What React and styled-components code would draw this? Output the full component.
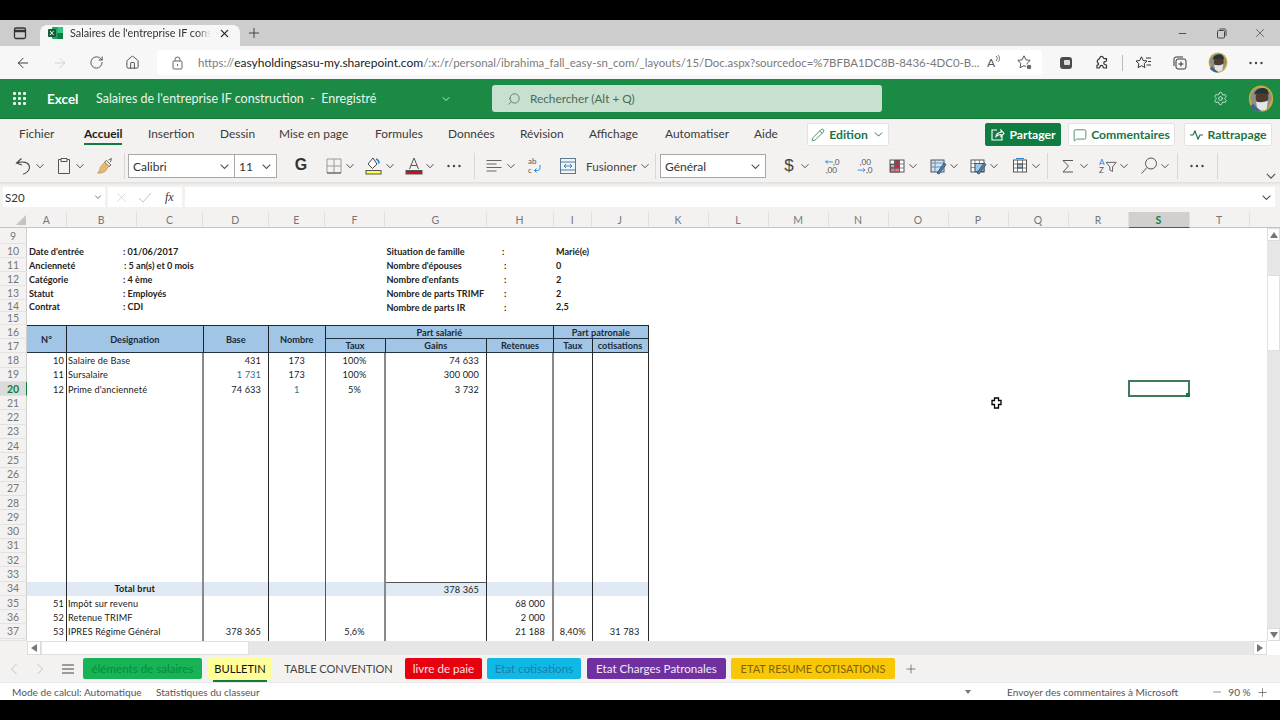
import React from 'react';
import styled, { createGlobalStyle } from 'styled-components';
import { ArrowLeft, ArrowRight, RotateCw, Home, Plus, X, Minus, Search, Settings, ChevronDown, Pencil, MessageSquare } from 'lucide-react';

const Global = createGlobalStyle`
  html, body { margin: 0; padding: 0; background: #000; }
  * { box-sizing: border-box; }
`;
const UI = `"Lato", "Liberation Sans", sans-serif`;
const Page = styled.div`
  width: 1280px; height: 720px; overflow: hidden; background: #000; display: flex; flex-direction: column;
  padding: 20px 0; font-family: ${UI}; color: #333;
`;
/* browser chrome */
const TabStrip = styled.div`height: 26px; background: #cdcdcd; display: flex; align-items: flex-end; position: relative; flex: none;`;
const TabAction = styled.div`width: 40px; height: 26px; display: flex; align-items: center; justify-content: center;`;
const ActiveTab = styled.div`
  width: 200px; height: 21px; background: #f7f7f7; border-radius: 7px 7px 0 0; display: flex; align-items: center; padding: 0 9px 5px 8px; gap: 7px; color: #333;
`;
const TabTitle = styled.span`
  flex: 1; overflow: hidden; white-space: nowrap; font-size: 10.8px; height: 14px;
  -webkit-mask-image: linear-gradient(90deg, #000 90%, transparent 100%);
`;
const NewTab = styled.div`width: 28px; height: 26px; display: flex; align-items: center; justify-content: center; color: #333;`;
const WindowBtns = styled.div`margin-left: auto; display: flex; height: 26px; padding-right: 1px;`;
const WinBtn = styled.div`width: 38.5px; display: flex; align-items: center; justify-content: center; color: #444;`;

const AddressBar = styled.div`height: 33px; background: #f7f7f7; display: flex; align-items: center; flex: none; padding-left: 5px;`;
const NavBtn = styled.div`width: 36.5px; height: 24px; display: flex; align-items: center; justify-content: center; color: ${p => p.$dim ? '#c9c9c9' : '#333'};`;
const UrlField = styled.div`
  width: 885px; height: 25px; margin-left: 6px; background: #fff; border-radius: 4px; display: flex; align-items: center; padding-left: 15px; font-size: 11.45px; color: #7a7a7a; white-space: nowrap; flex: none;
`;
const UrlText = styled.span`margin-left: 15px; width: 780px; flex: none;`;
const Host = styled.span`color: #222; font-size: 12px;`;
const UrlIcon = styled.div`width: 31px; display: flex; justify-content: center; align-items: center; flex: none; color: #555;`;
const ReadAloud = styled.span`font-size: 12px; color: #555; display: flex; align-items: flex-start;`;
const BarTools = styled.div`display: flex; align-items: center; margin-left: 6px; flex: 1;`;
const BarTool = styled.div`width: ${p => p.$w}px; margin-left: ${p => p.$ml || 0}px; display: flex; align-items: center; justify-content: center; flex: none; color: #333;`;
const BarSep = styled.div`width: 1px; height: 16px; background: #bbb; margin-left: 7px; flex: none;`;

/* excel header */
const AppHeader = styled.div`height: 40px; background: #1a8a45; display: flex; align-items: center; color: #fff; flex: none; border-bottom: 1px solid #17793d;`;
const Waffle = styled.div`width: 14px; height: 14px; margin-left: 13px; display: grid; grid-template-columns: repeat(3, 3px); gap: 2px; flex: none;`;
const Dot = styled.i`width: 3px; height: 3px; background: #e8f4ec; border-radius: 1px;`;
const Brand = styled.div`font-size: 13.5px; font-weight: 700; margin-left: 20px; width: 49px; flex: none; white-space: nowrap;`;
const DocTitle = styled.div`font-size: 12.5px; width: 344px; white-space: nowrap; flex: none; color: #e9f4ed;`;
const TitleChev = styled.div`width: 52px; flex: none; display: flex; color: #cfe6d7;`;
const SearchBox = styled.div`
  width: 390px; height: 27px; background: #c8e0d0; border-radius: 3px; display: flex; align-items: center; padding-left: 15px; gap: 9px; font-size: 11.8px; color: #4d6a58; flex: none;
`;
const HeaderRight = styled.div`margin-left: auto; display: flex; align-items: center; gap: 20px; padding-right: 6px;`;

/* ribbon */
const RibbonTabs = styled.div`height: 31px; background: #f3f2f1; display: flex; align-items: flex-start; padding-left: 19px; flex: none; font-size: 11.9px; color: #3b3a39;`;
const RTab = styled.div`
  width: ${p => p.$w}px; flex: none; padding-top: 7px; white-space: nowrap;
`;
const RLabel = styled.span`
  display: inline-block; height: 25px; ${p => p.$on && `color:#201f1e; font-weight:700; border-bottom: 2px solid #107c41; height: 19px;`}
`;
const Pill = styled.div`
  margin-top: 4px; margin-left: ${p => p.$ml || 0}px; width: ${p => p.$w}px; height: 23px; border-radius: 2px; display: flex; align-items: center; justify-content: center; gap: 4px; flex: none;
  background: ${p => p.$green ? '#107c41' : '#fff'}; color: ${p => p.$green ? '#fff' : '#217346'}; font-weight: 700; font-size: 12.2px;
  border: 1px solid ${p => p.$green ? '#107c41' : '#e3e2e0'};
`;
const Toolbar = styled.div`height: 33px; background: #f3f2f1; display: flex; align-items: center; padding-left: 13px; flex: none; border-bottom: 1px solid #e2e1df; box-shadow: 0 1px 2px #e0e0e0; position: relative;`;
const Tool = styled.div`
  width: ${p => p.$w}px; margin-left: ${p => p.$ml || 0}px; height: 24px; display: flex; align-items: center; justify-content: center; flex: none; color: #555;
`;
const ToolSep = styled.div`width: 1px; height: 26px; background: #d8d7d5; margin-left: ${p => p.$ml}px; flex: none;`;
const FontBox = styled.div`
  width: ${p => p.$w}px; margin-left: ${p => p.$ml}px; height: 24px; background: #fff; border: 1px solid #a9a8a6; display: flex; flex: none; font-size: 12px; color: #333;
`;
const FontPart = styled.div`
  width: ${p => p.$w}px; display: flex; align-items: center; justify-content: space-between; padding: 0 4px 0 4px; flex: ${p => p.$w ? 'none' : 1};
  ${p => p.$div && 'border-left: 1px solid #a9a8a6;'}
`;
const Bold = styled.span`font-size: 16px; font-weight: 700; color: #333; font-family: "Liberation Sans", sans-serif; margin-top: -2px;`;
const ToolText = styled.span`font-size: 11.7px; color: #444; margin-left: ${p => p.$ml}px; width: 50px; flex: none; white-space: nowrap;`;
const RibbonCollapse = styled.div`position: absolute; right: 3px; bottom: 0; color: #555; display: flex;`;

/* formula */
const FormulaBar = styled.div`height: 29px; background: #f3f2f1; display: flex; align-items: flex-start; padding: 4px 5px 0 3px; gap: 3px; flex: none;`;
const NameBox = styled.div`width: 102px; height: 20px; background: #fff; display: flex; align-items: center; justify-content: space-between; padding: 0 3px 0 2px; font-size: 11.5px; color: #333; flex: none;`;
const FxBox = styled.div`width: 74px; height: 20px; background: #fff; display: flex; align-items: center; padding-left: 6px; gap: 9px; flex: none;`;
const Fx = styled.i`font-family: "Liberation Serif", serif; font-size: 12px; color: #333; margin-left: 4px;`;
const FormulaField = styled.div`flex: 1; height: 20px; background: #fff;`;
const FormulaChev = styled.div`position: absolute; right: 3px; color: #555; display: flex;`;
const FormulaWrap = styled.div`position: relative; display: flex; align-items: center; flex: 1; height: 20px;`;

const ColHeaders = styled.div`height: 16px; background: #f3f2f1; display: flex; border-bottom: 1px solid #c6c5c3; flex: none;`;
const Corner = styled.div`width: 27px; flex: none; position: relative;`;
const Tri = styled.div`position: absolute; right: 1px; bottom: 2px; width: 0; height: 0; border-left: 10px solid transparent; border-bottom: 10px solid #c4c4c4;`;
const ColHead = styled.div`
  width: ${p => p.$w}px; flex: none; display: flex; align-items: center; justify-content: center; font-size: 10.5px; color: ${p => p.$on ? '#107c41' : '#777'};
  font-weight: ${p => p.$on ? 700 : 400}; background: ${p => p.$on ? '#d2d0ce' : 'transparent'};
  border-right: 1px solid #e1e0de; ${p => p.$on && 'border-bottom: 1.5px solid #107c41; height: 16px;'}
`;

/* sheet */
const SheetArea = styled.div`height: 413px; display: flex; flex: none; background: #fff;`;
const Sheet = styled.div`
  position: relative; flex: 1; overflow: hidden; display: grid; font-family: "Lato", sans-serif; font-size: 9.2px; color: #1a1a1a;
  grid-template-columns: 27px 40px 70.5px 66px 65.5px 56.5px 60px 101.5px 67px 38.5px 56px 1fr;
  grid-template-rows: 16px 14px 14px 14px 14px 12px 13px 14.2px 14.2px repeat(20, 14.27px) 2px;
`;
const RowHead = styled.div`
  grid-column: 1; grid-row: ${p => p.$r}; background: ${p => p.$on ? '#dcdbd9' : '#f3f2f1'}; border-bottom: 1px solid #e3e2e0; display: flex; align-items: center; justify-content: center;
  font-size: 10.5px; color: ${p => p.$on ? '#107c41' : '#777'}; font-weight: ${p => p.$on ? 700 : 400}; overflow: hidden; border-right: 1px solid ${p => p.$on ? '#107c41' : '#d0cfcd'};
`;
const Info = styled.div`
  grid-column: ${p => p.$c}; grid-row: ${p => p.$r}; white-space: nowrap; display: flex; align-items: center; font-weight: 700; font-size: 9.1px; color: #222;
  padding-left: ${p => p.$pl}px; padding-top: ${p => p.$pt || 0}px;
`;
const HeadCell = styled.div`
  grid-column: ${p => p.$c} / span ${p => p.$cs || 1}; grid-row: ${p => p.$r} / span ${p => p.$rs || 1};
  background: #a0c5e6; display: flex; align-items: center; justify-content: center; font-weight: 700; font-size: 9.2px; color: #1c2a36;
  border-right: 1px solid #222; border-top: ${p => p.$top ? '1.5px solid #1d2b38' : 'none'}; border-bottom: 1px solid #24323e;
`;
const Body = styled.div`
  grid-column: ${p => p.$c} / span ${p => p.$cs}; grid-row: ${p => p.$r}; display: flex; align-items: center; white-space: nowrap; overflow: visible; min-height: 0;
  justify-content: ${p => p.$a === 'r' ? 'flex-end' : p.$a === 'c' ? 'center' : 'flex-start'};
  padding: 0 ${p => p.$pr}px 0 ${p => p.$pl}px; font-weight: ${p => p.$b ? 700 : 400}; letter-spacing: .12px;
  background: ${p => p.$band ? '#dfeaf4' : 'transparent'};
  border-right: ${p => p.$rule === 'thick' ? '2px solid #8a8a8a' : p.$rule === 'mid' ? '1.5px solid #555' : '1px solid #2a2a2a'};
  border-top: ${p => p.$tb ? '1.5px solid #555' : 'none'};
`;
const BodyText = styled.span`color: ${p => p.$blue ? '#1f6f9a' : '#1a1a1a'};`;
const Selection = styled.div`position: absolute; left: 1127.5px; top: 152px; width: 62px; height: 17px; border: 2px solid #3f7b5b;`;
const Handle = styled.div`position: absolute; right: -2px; bottom: -2px; width: 4px; height: 4px; background: #107c41;`;
const Pointer = styled.svg`position: absolute; left: 991px; top: 169px;`;

const VScroll = styled.div`width: 13px; background: #e6e6e6; display: flex; flex-direction: column; flex: none;`;
const SBtn = styled.div`
  width: ${p => p.$w || 13}px; height: ${p => p.$h || 13}px; background: #fff; border: 1px solid #dcdcdc; display: flex; align-items: center; justify-content: center; flex: none;
`;
const VThumb = styled.div`height: 76px; background: #fff; margin-top: 34px; flex: none; border: 1px solid #e0e0e0;`;
const Grow = styled.div`flex: 1;`;
const HScroll = styled.div`height: 14px; display: flex; background: #f3f2f1; flex: none;`;
const HLead = styled.div`width: 27px; flex: none;`;
const HTrack = styled.div`flex: 1; display: flex; background: #e6e6e6;`;
const HThumb = styled.div`width: 208px; background: #fff; border: 1px solid #e0e0e0; flex: none;`;
const HTail = styled.div`width: 13px; flex: none; background: #fff;`;
const Arrow = styled.div`
  width: 0; height: 0;
  ${p => p.$d === 'up' && 'border-left:4px solid transparent;border-right:4px solid transparent;border-bottom:6px solid #777;'}
  ${p => p.$d === 'down' && 'border-left:4px solid transparent;border-right:4px solid transparent;border-top:6px solid #777;'}
  ${p => p.$d === 'left' && 'border-top:4px solid transparent;border-bottom:4px solid transparent;border-right:6px solid #777;'}
  ${p => p.$d === 'right' && 'border-top:4px solid transparent;border-bottom:4px solid transparent;border-left:6px solid #777;'}
`;

/* sheet tabs */
const SheetTabs = styled.div`height: 27px; background: #f3f2f1; display: flex; align-items: flex-start; padding: 3px 0 0 0; flex: none;`;
const TabNav = styled.div`width: ${p => p.$w}px; height: 21px; display: flex; align-items: center; justify-content: center; flex: none; color: ${p => p.$dim ? '#c4c4c4' : '#555'};`;
const STab = styled.div`
  width: ${p => p.$w}px; margin-left: ${p => p.$ml || 0}px; height: 21px; flex: none; display: flex; align-items: center; justify-content: center; border-radius: 2px; white-space: nowrap; position: relative;
  background: ${p => p.$bg}; color: ${p => p.$fg}; font-size: ${p => p.$fs}px;
`;
const TabLine = styled.div`position: absolute; left: 5px; right: 5px; bottom: -3px; height: 2px; background: #107c41;`;
const AddSheet = styled.div`margin-left: 9px; width: 14px; height: 21px; display: flex; align-items: center; justify-content: center; color: #555; flex: none;`;

/* status */
const Status = styled.div`height: 18px; background: #fff; display: flex; align-items: center; padding: 1px 0 0 12px; font-size: 10.1px; color: #555; flex: none; white-space: nowrap; border-top: 1px solid #e8e8e8;`;
const StatusItem = styled.span`width: ${p => p.$w}px; flex: none;`;
const Zoomer = styled.div`width: 58px; display: flex; align-items: center; justify-content: space-between; flex: none; margin-left: 33px; color: #555;`;
const SmallCaret = styled.div`width: 42px; margin-left: 706px; flex: none; display: flex; color: #666;`;

const Chev = ({ s = 10 }) => (
  <svg width={s} height={s} viewBox="0 0 10 10" fill="none" stroke="#555" strokeWidth="1"><path d="M1.5 3.2 5 6.8l3.5-3.6" /></svg>
);
const Ico = ({ children, w = 18, h = 18, vb = '0 0 18 18' }) => (
  <svg width={w} height={h} viewBox={vb} fill="none" strokeWidth="1" stroke="#555">{children}</svg>
);
const ExcelFav = () => (
  <svg width="15" height="14" viewBox="0 0 15 14">
    <rect x="4" y="1" width="11" height="12" rx="1" fill="#21a366" />
    <rect x="9.5" y="1" width="5.5" height="6" fill="#33c481" /><rect x="9.5" y="7" width="5.5" height="6" fill="#107c41" />
    <rect x="0" y="3" width="8" height="8" rx="1" fill="#185c37" />
    <path d="M2 5l3.5 4M5.5 5 2 9" stroke="#fff" strokeWidth="1" />
  </svg>
);
const Avatar = ({ s }) => (
  <svg width={s} height={s * 1.05} viewBox="0 0 26 28">
    <ellipse cx="13" cy="14" rx="12.5" ry="13.5" fill="#c9a93a" />
    <path d="M2 14C2 6 8 2 15 3c5 1 9 5 9 11l-4 10H6Z" fill="#8b8f88" />
    <ellipse cx="14" cy="13" rx="6.5" ry="7.5" fill="#4f3a2c" />
    <path d="M6 10c1-6 6-7 9-7s6 2 6 7c-5-2-10-2-15 0Z" fill="#26343a" />
    <path d="M8 17c3 1 8 1 12-1l-1 8c-3 3-8 3-10 0Z" fill="#dfe6ea" />
    <path d="M2 22c3 4 8 6 12 5-3-2-7-5-9-8Z" fill="#47628c" />
  </svg>
);
const StarPath = 'M8 1.8l1.9 4 4.3.6-3.1 3 .8 4.3L8 11.6l-3.9 2.1.8-4.3-3.1-3 4.3-.6Z';
const tools = {
  undo: <Ico w={20} h={20} vb="0 0 20 20"><path d="M8.5 2.5 3.5 7l5.5 2M3.8 7c6-2 12-.8 12.6 3.6.4 3.6-3.2 6.4-6.2 7.6" stroke="#444" strokeWidth="1.1" /></Ico>,
  clip: <Ico><path d="M6 2.5H3.5v14h11v-14H12M6 1.5h6v3H6Z" stroke="#555" /></Ico>,
  brush: <Ico><path d="M10.5 3.5 15 8l-2 1.5L8.500 5ZM12.5 3l3-1.5-1 3.500" stroke="#666" fill="#f2f1ef" /><path d="M8.5 5.5 12.5 9.5 9.5 14c-2 1.8-5 2.5-8 2 2-1.5 2.5-4 3-6Z" fill="#e7b873" stroke="#b98f50" strokeWidth=".7" /></Ico>,
  border: <Ico><path d="M2 2h14v14H2ZM9 2v14M2 9h14" stroke="#9a9a9a" /><path d="M2 16h14" stroke="#555" /></Ico>,
  fill: <Ico w={20} h={20} vb="0 0 20 20"><path d="M9 2 4 8l4.5 4.5L13 8Z" stroke="#444" fill="#fff" /><path d="M12 3c2 .6 3 2 3 4.5" stroke="#2b88d8" strokeWidth="1.6" /><rect x="2" y="14.5" width="15" height="3.5" fill="#ffff33" /></Ico>,
  color: <Ico w={20} h={20} vb="0 0 20 20"><path d="M5.5 13 10 2l4.5 11M7 9.5h6" stroke="#555" /><rect x="2" y="14.5" width="16" height="3.5" fill="#c8101d" /></Ico>,
  dots: <svg width="16" height="4" viewBox="0 0 16 4"><circle cx="2.5" cy="2" r="1.2" fill="#444" /><circle cx="8" cy="2" r="1.2" fill="#444" /><circle cx="13.5" cy="2" r="1.2" fill="#444" /></svg>,
  align: <Ico><path d="M1.5 3.5h15M1.5 7h10M1.5 10.5h15M1.5 14h10" stroke="#666" /></Ico>,
  wrap: <Ico w={20} h={20} vb="0 0 20 20"><text x="3" y="8" fontSize="8" fill="#555" stroke="none" fontFamily="Lato">ab</text><text x="3" y="17" fontSize="8" fill="#555" stroke="none" fontFamily="Lato">c</text><path d="M15 9v2.5c0 2-1 3-3 3H9.5M11.5 12.5l-2 2 2 2" stroke="#2b88d8" /></Ico>,
  merge: <Ico w={20} h={20} vb="0 0 20 20"><rect x="2.5" y="2.5" width="15" height="15" stroke="#60788e" fill="#eef4f8" /><path d="M2.5 6h15M2.5 14h15" stroke="#60788e" /><path d="M6 10h8M8 8l-2 2 2 2M12 8l2 2-2 2" stroke="#2b88d8" /></Ico>,
  dollar: <span style={{ fontSize: 17, color: '#444', fontFamily: 'Liberation Sans' }}>$</span>,
  decL: <Ico w={22} h={20} vb="0 0 22 20"><path d="M12 5.5H4M6 3.5l-2 2 2 2" stroke="#2b88d8" /><text x="12" y="9" fontSize="9" fill="#555" stroke="none" fontFamily="Lato">,0</text><text x="4" y="18" fontSize="9" fill="#555" stroke="none" fontFamily="Lato">,00</text></Ico>,
  decR: <Ico w={22} h={20} vb="0 0 22 20"><text x="5" y="9" fontSize="9" fill="#555" stroke="none" fontFamily="Lato">,00</text><path d="M3 14.5h8M9 12.5l2 2-2 2" stroke="#2b88d8" /><text x="12" y="18" fontSize="9" fill="#555" stroke="none" fontFamily="Lato">,0</text></Ico>,
  cond: <Ico><rect x="2" y="3" width="14" height="12" fill="#fff" stroke="#555" /><rect x="6.5" y="3.5" width="5" height="4" fill="#c22a43" /><rect x="2.5" y="7.5" width="4.5" height="3.5" fill="#ef9aa9" /><rect x="7" y="7" width="4.5" height="4" fill="#c22a43" /><rect x="2.5" y="11" width="9" height="4" fill="#ef6f86" /><path d="M7 3v12M11.5 3v12M2 7h14M2 11h14" stroke="#666" strokeWidth=".8" /></Ico>,
  ftable: <Ico><rect x="2" y="3" width="13" height="12" fill="#cfe3f5" stroke="#555" /><path d="M2 6h13M2 10h13M6 3v12" stroke="#5c7a95" strokeWidth=".8" /><path d="M8 16 15 6l2 1.5L10 17Z" fill="#2b88d8" /></Ico>,
  cstyle: <Ico><rect x="2" y="3" width="13" height="12" fill="#fff" stroke="#555" /><path d="M2 6.5h13M2 10.5h13M6 3v12M10.5 3v12" stroke="#5c7a95" strokeWidth=".8" /><rect x="6" y="6.5" width="9" height="8" fill="#9cc8ec" /><path d="M8 16 15 6l2 1.5L10 17Z" fill="#3f8bc6" /></Ico>,
  cells: <Ico><rect x="2.5" y="3" width="13" height="12" fill="#fff" stroke="#555" /><rect x="6.5" y="7" width="5" height="4" fill="#9cc8ec" /><path d="M2.5 7h13M2.5 11h13M6.5 3v12M11.5 3v12" stroke="#555" strokeWidth=".8" /><path d="M5 1.500h8" stroke="#2b88d8" /></Ico>,
  sigma: <Ico><path d="M14 3.5H4L9.5 9 4 15h10" stroke="#555" /></Ico>,
  sort: <Ico w={22} h={20} vb="0 0 22 20"><text x="1" y="9" fontSize="9" fill="#2b88d8" stroke="none" fontFamily="Lato">A</text><text x="1" y="18" fontSize="9" fill="#555" stroke="none" fontFamily="Lato">Z</text><path d="M9 6h11l-4 5v5l-3-1.5V11Z" stroke="#555" /></Ico>,
  find: <Ico w={20} h={20} vb="0 0 20 20"><circle cx="12" cy="7.5" r="5.5" stroke="#555" /><path d="M8 11.5 2.5 17.5" stroke="#555" /></Ico>,
};
function C2(ml) { return ['chev', 10, ml]; }
const toolbar = [
  ['undo', 20], C2(2), ['clip', 20, 9], C2(1), ['brush', 20, 10], ['sep', 0, 9], ['font'],
  ['G', 20, 14], ['border', 20, 13], C2(1), ['fill', 20, 9], C2(1), ['color', 20, 9], C2(1), ['dots', 20, 9], ['sep', 0, 10],
  ['align', 20, 9], C2(2), ['wrap', 20, 9], ['merge', 20, 13], ['fus'], C2(4), ['sep', 0, 5], ['gen'],
  ['dollar', 20, 13], C2(1), ['decL', 20, 12], ['decR', 20, 13], ['cond', 20, 12], C2(1), ['ftable', 20, 10], C2(1), ['cstyle', 20, 9], C2(1), ['cells', 20, 11], C2(1), ['sep', 0, 6],
  ['sigma', 20, 10], C2(1), ['sort', 20, 9], C2(1), ['find', 20, 10], C2(1), ['sep', 0, 7], ['dots', 20, 9], ['sep', 0, 10],
];

const ribbon = [['Fichier', 65], ['Accueil', 64, true], ['Insertion', 72], ['Dessin', 59], ['Mise en page', 96], ['Formules', 73], ['Données', 72], ['Révision', 69], ['Affichage', 76], ['Automatiser', 89], ['Aide', 53]];
const columns = [['A', 39.5], ['B', 70.5], ['C', 66], ['D', 65.5], ['E', 56.5], ['F', 60], ['G', 101.5], ['H', 67], ['I', 38.5], ['J', 56.5], ['K', 60], ['L', 60], ['M', 60], ['N', 60], ['O', 60], ['P', 60], ['Q', 60], ['R', 60], ['S', 61, true], ['T', 60]];
const info = [
  [10, 2, 2, "Date d'entrée"], [10, 3, 56, ': 01/06/2017'], [10, 8, 1, 'Situation de famille'], [10, 9, 15, ':'], [10, 10, 2, 'Marié(e)'],
  [11, 2, 2, 'Ancienneté'], [11, 3, 57, ': 5 an(s) et 0 mois'], [11, 8, 1, "Nombre d'épouses"], [11, 9, 17, ':'], [11, 10, 2, '0'],
  [12, 2, 2, 'Catégorie'], [12, 3, 56, ': 4 ème'], [12, 8, 1, "Nombre d'enfants"], [12, 9, 17, ':'], [12, 10, 2, '2'],
  [13, 2, 2, 'Statut'], [13, 3, 56, ': Employés'], [13, 8, 1, 'Nombre de parts TRIMF'], [13, 9, 17, ':'], [13, 10, 2, '2'],
  [14, 2, 2, 'Contrat'], [14, 3, 56, ': CDI'], [14, 8, 1, 'Nombre de parts IR', 3], [14, 9, 17, ':', 3], [14, 10, 2, '2,5'],
];
const bodyCols = [
  { k: 'A', c: 2, cs: 1, a: 'r', pr: 2, pl: 0, rule: 'thin' },
  { k: 'B', c: 3, cs: 2, a: 'l', pr: 0, pl: 1, rule: 'thick' },
  { k: 'D', c: 5, cs: 1, a: 'r', pr: 7, pl: 0, rule: 'thin' },
  { k: 'E', c: 6, cs: 1, a: 'c', pr: 0, pl: 0, rule: 'mid' },
  { k: 'F', c: 7, cs: 1, a: 'c', pr: 0, pl: 0, rule: 'thick' },
  { k: 'G', c: 8, cs: 1, a: 'r', pr: 7, pl: 0, rule: 'thin' },
  { k: 'H', c: 9, cs: 1, a: 'r', pr: 7, pl: 0, rule: 'thick' },
  { k: 'I', c: 10, cs: 1, a: 'c', pr: 0, pl: 0, rule: 'thin' },
  { k: 'J', c: 11, cs: 1, a: 'r', pr: 8, pl: 0, rule: 'thin' },
];
const body = {
  18: { A: '10', B: 'Salaire de Base', D: '431', E: '173', F: '100%', G: '74 633' },
  19: { A: '11', B: 'Sursalaire', D: '1 731', E: '173', F: '100%', G: '300 000', blue: ['D'] },
  20: { A: '12', B: "Prime d'ancienneté", D: '74 633', E: '1', F: '5%', G: '3 732', blue: ['E'] },
  34: { B: 'Total brut', G: '378 365', band: true },
  35: { A: '51', B: 'Impôt sur revenu', H: '68 000' },
  36: { A: '52', B: 'Retenue TRIMF', H: '2 000' },
  37: { A: '53', B: 'IPRES Régime Général', D: '378 365', F: '5,6%', H: '21 188', I: '8,40%', J: '31 783' },
};
const rowNums = Array.from({ length: 30 }, (_, i) => 9 + i);
const bodyRows = rowNums.filter(n => n >= 18);
const gr = n => n - 8;
const sheetTabs = [
  ['éléments de salaires', 119, 0, '#17b356', '#0b8a3e', 11.6],
  ['BULLETIN', 64, 6, '#ffff99', '#111', 11.1],
  ['TABLE CONVENTION', 107, 13, 'transparent', '#444', 11],
  ['livre de paie', 77, 13, '#e8000f', '#fbe3e3', 11.6],
  ['Etat cotisations', 94, 5, '#10b8e6', '#1f7ea8', 11.6],
  ['Etat Charges Patronales', 139, 6, '#7030a0', '#f1e8f6', 11.6],
  ['ETAT RESUME COTISATIONS', 164, 5, '#f8c808', '#7d6206', 11],
];

export default function App() {
  return (
    <Page>
      <Global />
      <TabStrip>
        <TabAction>
          <svg width="14" height="14" viewBox="0 0 14 14" fill="none" stroke="#333" strokeWidth="1.3"><rect x="1.5" y="2" width="11" height="10.5" rx="1.5" /><path d="M1.5 5h11" strokeWidth="2.5" /></svg>
        </TabAction>
        <ActiveTab>
          <ExcelFav />
          <TabTitle>Salaires de l'entreprise IF construction</TabTitle>
          <X size={13} color="#333" />
        </ActiveTab>
        <NewTab><Plus size={16} strokeWidth={1.3} /></NewTab>
        <WindowBtns>
          <WinBtn><Minus size={11} /></WinBtn>
          <WinBtn><svg width="11" height="11" viewBox="0 0 11 11" fill="none" stroke="#444"><rect x="1.5" y="2.5" width="7" height="7.5" rx="1" /><path d="M3.5 1h5A1.5 1.5 0 0 1 10 2.5V8" /></svg></WinBtn>
          <WinBtn><X size={14} strokeWidth={1.2} /></WinBtn>
        </WindowBtns>
      </TabStrip>
      <AddressBar>
        <NavBtn><ArrowLeft size={16} strokeWidth={1.4} /></NavBtn>
        <NavBtn $dim><ArrowRight size={16} strokeWidth={1.2} /></NavBtn>
        <NavBtn><RotateCw size={15} strokeWidth={1.3} /></NavBtn>
        <NavBtn><Home size={15} strokeWidth={1.3} /></NavBtn>
        <UrlField>
          <svg width="11" height="14" viewBox="0 0 11 14" fill="none" stroke="#666"><rect x="1" y="5" width="9" height="8" rx="1" /><path d="M3 5V3.5a2.5 2.5 0 0 1 5 0V5M5.5 8v2" /></svg>
          <UrlText>https://<Host>easyholdingsasu-my.sharepoint.com</Host>/:x:/r/personal/ibrahima_fall_easy-sn_com/_layouts/15/Doc.aspx?sourcedoc=%7BFBA1DC8B-8436-4DC0-B...</UrlText>
          <UrlIcon>
            <ReadAloud>A<svg width="5" height="8" viewBox="0 0 5 8" fill="none" stroke="#555" strokeWidth=".8"><path d="M1 1c1.5 1 1.5 4 0 5M3 0c2 2 2 5 0 7" /></svg></ReadAloud>
          </UrlIcon>
          <UrlIcon>
            <svg width="17" height="17" viewBox="0 0 17 17" fill="none" stroke="#555"><path d={StarPath} /><circle cx="13" cy="13" r="2.8" fill="#666" stroke="#fff" /></svg>
          </UrlIcon>
        </UrlField>
        <BarTools>
          <BarTool $w={26} $ml={5}><svg width="14" height="14" viewBox="0 0 14 14"><rect x="1" y="1" width="12" height="12" rx="3" fill="#4b4b4b" /><rect x="5" y="4" width="6" height="5" rx="1" fill="#ddd" /></svg></BarTool>
          <BarTool $w={26} $ml={10}><svg width="16" height="16" viewBox="0 0 16 16" fill="none" stroke="#333" strokeWidth="1.2"><path d="M6 2.5c.2-1.5 3-1.5 3.2 0 0 1 .6 1.2 1.5 1.2h1.800v2c-.2.8-1 1-1.600 1-1.500 0-1.500 2.800 0 2.800.6 0 1.400.2 1.600 1V13H10c-.8-.2-1-1-1-1.500 0-1.500-3-1.500-3 0 0 .5-.2 1.300-1 1.500H3V10.300c1.500 0 2-1.200 1-2.300-1-1-1-2.500 0-3.300C5 4 6 3.500 6 2.500Z" /></svg></BarTool>
          <BarSep />
          <BarTool $w={24} $ml={8}><svg width="17" height="16" viewBox="0 0 17 16" fill="none" stroke="#333"><path d="M6.500 1.800 8.200 5.500l3.800.5-2.800 2.700.7 3.900-3.400-1.900-3.400 1.900.7-3.900L1 6l3.800-.5ZM11 3h5M13 6.500h3M11.500 10h4.500" /></svg></BarTool>
          <BarTool $w={24} $ml={13}><svg width="16" height="16" viewBox="0 0 16 16" fill="none" stroke="#333"><rect x="4" y="4" width="10" height="10" rx="2" /><path d="M2 11V4a2 2 0 0 1 2-2h7M9 6.500v5M6.500 9h5" /></svg></BarTool>
          <BarTool $w={24} $ml={14}><Avatar s={20} /></BarTool>
          <BarTool $w={24} $ml={14}>{tools.dots}</BarTool>
        </BarTools>
      </AddressBar>

      <AppHeader>
        <Waffle>{Array.from({ length: 9 }, (_, i) => <Dot key={i} />)}</Waffle>
        <Brand>Excel</Brand>
        <DocTitle>Salaires de l'entreprise IF construction&nbsp; -&nbsp; Enregistré</DocTitle>
        <TitleChev><ChevronDown size={12} /></TitleChev>
        <SearchBox><Search size={14} strokeWidth={1.3} style={{ transform: 'scaleX(-1)' }} />Rechercher (Alt + Q)</SearchBox>
        <HeaderRight>
          <Settings size={15} color="#d4f0df" strokeWidth={1.4} />
          <Avatar s={26} />
        </HeaderRight>
      </AppHeader>

      <RibbonTabs>
        {ribbon.map(([t, w, on]) => <RTab key={t} $w={w}><RLabel $on={on}>{t}</RLabel></RTab>)}
        <Pill $w={82}><Pencil size={14} strokeWidth={1.3} />Edition <ChevronDown size={13} strokeWidth={1.8} /></Pill>
        <Pill $w={76} $ml={96} $green>
          <svg width="15" height="15" viewBox="0 0 15 15" fill="none" stroke="#fff" strokeWidth="1.1"><path d="M7 3H2v10h10V9M6 9.500C6.500 6.500 9 5.500 11 5.500V3l3 3.500-3 3V7.500c-2 0-3.500.5-5 2Z" /></svg>
          Partager
        </Pill>
        <Pill $w={107} $ml={7}><MessageSquare size={14} strokeWidth={1.3} />Commentaires</Pill>
        <Pill $w={88} $ml={9}>
          <svg width="14" height="10" viewBox="0 0 14 10" fill="none" stroke="#217346" strokeWidth="1.2"><path d="M0 5h3l2-4 3 8 2-4h3" /></svg>
          Rattrapage
        </Pill>
      </RibbonTabs>

      <Toolbar>
        {toolbar.map(([k, w, ml], i) => {
          if (k === 'sep') return <ToolSep key={i} $ml={ml} />;
          if (k === 'font') return (
            <FontBox key={i} $w={149} $ml={3}>
              <FontPart>Calibri <Chev s={11} /></FontPart>
              <FontPart $w={42} $div>11 <Chev s={11} /></FontPart>
            </FontBox>
          );
          if (k === 'gen') return <FontBox key={i} $w={106} $ml={4}><FontPart>Général <Chev s={11} /></FontPart></FontBox>;
          if (k === 'fus') return <ToolText key={i} $ml={8}>Fusionner</ToolText>;
          if (k === 'chev') return <Tool key={i} $w={10} $ml={ml}><Chev /></Tool>;
          if (k === 'G') return <Tool key={i} $w={w} $ml={ml}><Bold>G</Bold></Tool>;
          return <Tool key={i} $w={w} $ml={ml}>{tools[k]}</Tool>;
        })}
        <RibbonCollapse><Chev s={12} /></RibbonCollapse>
      </Toolbar>

      <FormulaBar>
        <NameBox>S20 <Chev s={8} /></NameBox>
        <FxBox>
          <X size={15} color="#c4c4c4" strokeWidth={1} />
          <svg width="14" height="13" viewBox="0 0 14 13" fill="none" stroke="#c4c4c4"><path d="M1 7l4 4 8-9" /></svg>
          <Fx>fx</Fx>
        </FxBox>
        <FormulaWrap>
          <FormulaField />
          <FormulaChev><Chev s={11} /></FormulaChev>
        </FormulaWrap>
      </FormulaBar>

      <ColHeaders>
        <Corner><Tri /></Corner>
        {columns.map(([l, w, on]) => <ColHead key={l} $w={w} $on={on}>{l}</ColHead>)}
      </ColHeaders>

      <SheetArea>
        <Sheet>
          {rowNums.map(n => <RowHead key={n} $r={gr(n)} $on={n === 20}>{n !== 38 && n}</RowHead>)}
          {info.map(([r, c, pl, t, pt], i) => <Info key={i} $r={gr(r)} $c={c} $pl={pl} $pt={pt}>{t}</Info>)}
          <HeadCell $c={2} $r={gr(16)} $rs={2} $top>N°</HeadCell>
          <HeadCell $c={3} $cs={2} $r={gr(16)} $rs={2} $top>Designation</HeadCell>
          <HeadCell $c={5} $r={gr(16)} $rs={2} $top>Base</HeadCell>
          <HeadCell $c={6} $r={gr(16)} $rs={2} $top>Nombre</HeadCell>
          <HeadCell $c={7} $cs={3} $r={gr(16)} $top>Part salarié</HeadCell>
          <HeadCell $c={10} $cs={2} $r={gr(16)} $top>Part patronale</HeadCell>
          <HeadCell $c={7} $r={gr(17)}>Taux</HeadCell>
          <HeadCell $c={8} $r={gr(17)}>Gains</HeadCell>
          <HeadCell $c={9} $r={gr(17)}>Retenues</HeadCell>
          <HeadCell $c={10} $r={gr(17)}>Taux</HeadCell>
          <HeadCell $c={11} $r={gr(17)}>cotisations</HeadCell>
          {bodyRows.map(n => bodyCols.map(col => {
            const row = body[n] || {};
            const total = n === 34 && col.k === 'B';
            return (
              <Body key={`${n}${col.k}`} $r={gr(n)} $c={col.c} $cs={col.cs} $a={total ? 'c' : col.a} $pr={col.pr} $pl={col.pl} $rule={col.rule}
                $band={row.band} $b={total} $tb={n === 34 && col.k === 'G'}>
                {row[col.k] && <BodyText $blue={row.blue && row.blue.includes(col.k)}>{row[col.k]}</BodyText>}
              </Body>
            );
          }))}
          <Selection><Handle /></Selection>
          <Pointer width="11" height="12" viewBox="0 0 11 12"><path d="M3.5 1h4v2.5H10v4H7.5V11h-4V7.5H1v-4h2.5Z" fill="#fff" stroke="#000" strokeWidth="1.3" /></Pointer>
        </Sheet>
        <VScroll>
          <SBtn><Arrow $d="up" /></SBtn>
          <VThumb />
          <Grow />
          <SBtn><Arrow $d="down" /></SBtn>
        </VScroll>
      </SheetArea>

      <HScroll>
        <HLead />
        <HTrack>
          <SBtn $w={14} $h={14}><Arrow $d="left" /></SBtn>
          <HThumb />
          <Grow />
          <SBtn $w={14} $h={14}><Arrow $d="right" /></SBtn>
        </HTrack>
        <HTail />
      </HScroll>

      <SheetTabs>
        <TabNav $w={28} $dim><svg width="8" height="12" viewBox="0 0 8 12" fill="none" stroke="currentColor"><path d="M6.5 1 1.5 6l5 5" /></svg></TabNav>
        <TabNav $w={24} $dim><svg width="8" height="12" viewBox="0 0 8 12" fill="none" stroke="currentColor"><path d="M1.5 1l5 5-5 5" /></svg></TabNav>
        <TabNav $w={31}><svg width="12" height="10" viewBox="0 0 12 10" fill="none" stroke="#444" strokeWidth="1.2"><path d="M0 1h12M0 5h12M0 9h12" /></svg></TabNav>
        {sheetTabs.map(([t, w, ml, bg, fg, fs], i) => (
          <STab key={t} $w={w} $ml={ml} $bg={bg} $fg={fg} $fs={fs}>{t}{i === 1 && <TabLine />}</STab>
        ))}
        <AddSheet><Plus size={14} strokeWidth={1.2} /></AddSheet>
      </SheetTabs>

      <Status>
        <StatusItem $w={144}>Mode de calcul: Automatique</StatusItem>
        <StatusItem $w={103}>Statistiques du classeur</StatusItem>
        <SmallCaret><svg width="6" height="4" viewBox="0 0 6 4"><path d="M0 0h6L3 4Z" fill="#777" /></svg></SmallCaret>
        <StatusItem $w={171}>Envoyer des commentaires à Microsoft</StatusItem>
        <Zoomer>
          <Minus size={12} strokeWidth={1.3} />90 %<Plus size={13} strokeWidth={1.3} />
        </Zoomer>
      </Status>
    </Page>
  );
}
